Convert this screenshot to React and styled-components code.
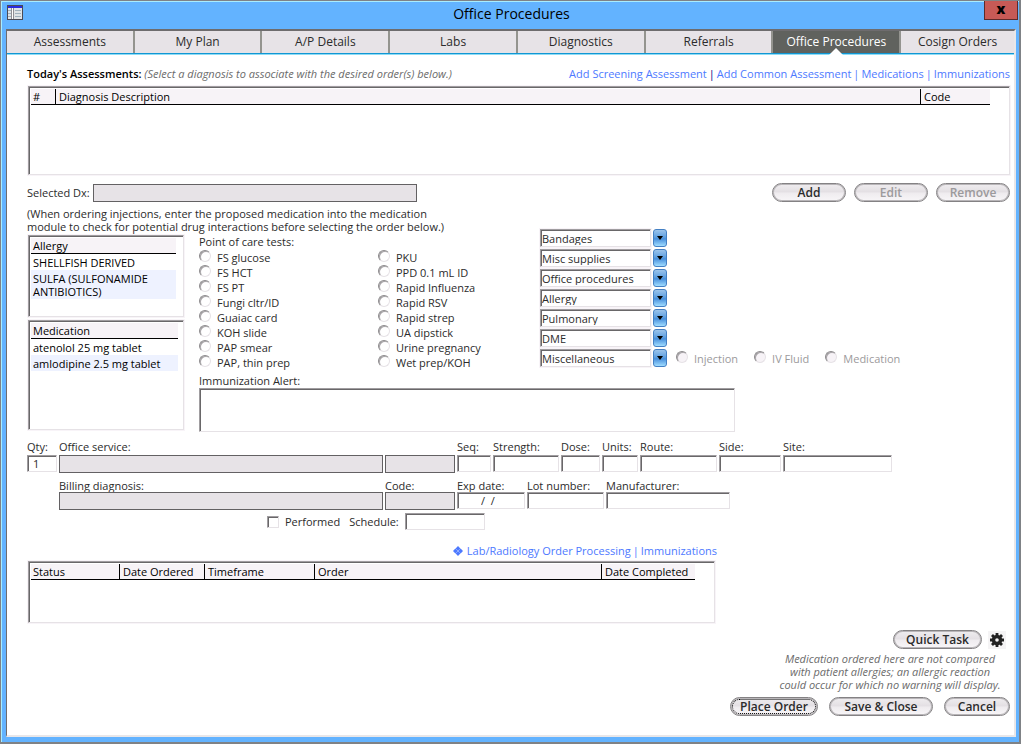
import React, { useRef } from "react";
import styled, { createGlobalStyle, css } from "styled-components";

const GlobalStyle = createGlobalStyle`
  * {
    box-sizing: border-box;
  }

  body {
    margin: 0;
    background: #63b3ff;
    color: #2b2b2b;
    font: 11px/13px "Open Sans", "Noto Sans", sans-serif;
  }

  button,
  input,
  select,
  textarea {
    margin: 0;
    color: inherit;
    font: inherit;
  }
`;

const sunken = css`
  border: 1px solid;
  border-color: #a09da0 #e6e2e6 #e6e2e6 #a09da0;
  box-shadow: inset 1px 1px #696769;
  background: #fff;
`;

/* window frame */

const Window = styled.div`
  display: flex;
  flex-direction: column;
  min-height: 100vh;
  border: 1px solid #7f8286;
  border-right-width: 2px;
  border-bottom-width: 2px;
  background: #63b3ff;
  box-shadow: inset 1px 1px #a8ecff;
`;

const TitleBar = styled.header`
  display: grid;
  grid-template-columns: 34px 1fr 34px;
  height: 28px;
  margin: 0 1px 0 4px;
`;

const WindowIcon = styled.svg`
  margin: 4px 0 0 2px;
`;

const Title = styled.h1`
  margin: 3px 0 0;
  color: #000;
  font-size: 14px;
  line-height: 20px;
  font-weight: 400;
  text-align: center;
`;

const CloseButton = styled.button`
  height: 19px;
  padding: 0 0 3px;
  border: 1px solid #5c2b2b;
  border-top: 0;
  background: #c75a56;
  color: #000;
  font-size: 14px;
  line-height: 14px;
  font-weight: 800;
`;

const Client = styled.main`
  display: flex;
  flex: 1;
  flex-direction: column;
  margin: 0 3px 5px 5px;
  border: 1px solid #6e6c6e;
  border-top-width: 2px;
  border-right: 2px solid #e9e7e9;
  border-bottom: 2px solid #e9e7e9;
  background: #fff;
`;

const Tabs = styled.nav`
  display: grid;
  grid-template-columns: repeat(7, 128fr) 113fr;
  border-bottom: 1px solid #1197d4;
  box-shadow: 0 1px #8fdcf5;
`;

const Tab = styled.button`
  position: relative;
  height: 22px;
  padding: 0;
  border: 0;
  border-right: 2px solid #94948f;
  background: ${({ $active }) => ($active ? "#60625e" : "#e7e3e7")};
  color: ${({ $active }) => ($active ? "#fff" : "#2b2b2b")};
  font-size: 12px;
  line-height: 20px;

  &:last-child {
    border-right: 0;
  }
`;

const TabPointer = styled.svg`
  position: absolute;
  bottom: -2px;
  left: 50%;
  margin-left: -7px;
`;

const Body = styled.div`
  display: flex;
  flex: 1;
  flex-direction: column;
  padding: 13px 4px 19px 20px;
`;

/* shared parts */

const Row = styled.div`
  display: flex;
  align-items: center;
  justify-content: space-between;
`;

const Heading = styled.h2`
  margin: 0;
  color: #000;
  font-size: 11px;
  line-height: 13px;
  font-weight: 600;

  em {
    color: #6b6b6b;
    font-weight: 400;
  }
`;

const Links = styled.div`
  display: flex;
  gap: 2px;
  color: #4d79ff;

  a {
    color: inherit;
    text-decoration: none;
  }
`;

const DarkBar = styled.span`
  color: #000080;
`;

const ListBox = styled.div`
  ${sunken}
  height: ${({ $height }) => $height}px;
  margin-left: 1px;
  padding: 2px ${({ $gutter }) => $gutter}px 0 2px;
  outline: 1px solid #f8f4f8;
  color: #000;
`;

const AssessmentBox = styled(ListBox)`
  margin-top: 6px;
  margin-bottom: 8px;
`;

const Table = styled.table`
  width: 100%;
  border-collapse: separate;
  border-spacing: 0;
  table-layout: fixed;

  th {
    height: 16px;
    padding: 0 2px;
    border-right: 1px solid #000;
    border-bottom: 1px solid #000;
    background: #f7f3f7;
    font-weight: 400;
    line-height: 15px;
    text-align: left;
  }

  th + th {
    padding-left: 3px;
  }

  th:last-child {
    border-right: 0;
  }

  td {
    padding: 2px 2px 1px;
  }

  tr:nth-child(even) td {
    background: #eef2ff;
  }
`;

const Col = styled.col`
  width: ${({ $width }) => $width}px;
`;

const Pill = styled.button`
  min-width: ${({ $width }) => $width}px;
  height: 19px;
  padding: 0 8px;
  border: 1px solid #848284;
  border-radius: 10px;
  background: linear-gradient(#efedef, #e4e0e4 45%, #efecef 55%, #f8f6f8);
  box-shadow: inset 0 0 0 1px #b8b5b8;
  color: #2b2b2b;
  font-size: 12px;
  line-height: 17px;
  font-weight: 600;
  ${({ $focused }) =>
    $focused && "outline: 1px dotted #000; outline-offset: -3px;"}

  &:disabled {
    color: #9c9a9c;
  }
`;

const Buttons = styled.div`
  display: flex;
  gap: ${({ $gap }) => $gap}px;
`;

const Input = styled.input`
  ${sunken}
  width: 100%;
  height: 17px;
  padding: 0 5px;
  border-radius: 0;

  &:read-only {
    height: 18px;
    border: 1px solid #636163;
    background: #e7e3e7;
    box-shadow: none;
  }
`;

const DxField = styled.label`
  display: grid;
  grid-template-columns: 64px 324px;
  gap: 2px;
  align-items: center;
`;

const Note = styled.p`
  margin: 5px 0 2px;
`;

/* middle of the form */

const Middle = styled.div`
  display: grid;
  grid-template-columns: 157px 1fr;
  gap: 15px;
`;

const Lists = styled.div`
  display: grid;
  gap: 3px;
  align-content: start;
`;

const Choices = styled.div`
  display: grid;
  grid-template-columns: 341px 1fr;
`;

const Tests = styled.fieldset`
  display: grid;
  grid-template-rows: repeat(8, 15px);
  grid-template-columns: 179px 1fr;
  grid-auto-flow: column;
  align-content: start;
  margin: 0;
  padding: 2px 0 0;
  border: 0;
`;

const Legend = styled.legend`
  padding: 0;
`;

const Choice = styled.label`
  display: flex;
  gap: 6px;
  align-items: flex-start;
  color: ${({ $muted }) => ($muted ? "#9c9a9c" : "inherit")};
  line-height: 15px;
`;

const Radio = styled.input`
  width: 12px;
  height: 12px;
  appearance: none;
  border: 1px solid;
  border-color: #8c8a8c #e6e2e6 #e6e2e6 #8c8a8c;
  border-radius: 50%;
  background: #fff;
  box-shadow: inset 1px 1px #a8a5a8;

  &:checked {
    background: radial-gradient(#000 2px, #fff 3px);
  }

  &:disabled {
    background: #f7f3f7;
  }
`;

/* the drop-downs start a little above the lists beside them */
const Pickers = styled.div`
  display: grid;
  gap: 2px;
  align-content: start;
  margin-top: -6px;
`;

const PickerRow = styled.div`
  display: flex;
  gap: 2px;
  align-items: center;
`;

const Select = styled.select`
  ${sunken}
  width: 111px;
  height: 18px;
  padding: 0 1px;
  border-radius: 0;
  appearance: none;
  outline: 1px solid #f8f4f8;
`;

const ArrowButton = styled.button`
  display: grid;
  place-items: center;
  width: 14px;
  height: 18px;
  padding: 0;
  border: 1px solid #4480c4;
  border-radius: 3px;
  background: linear-gradient(#9cc4ec, #5f9fe0 45%, #4a90dc 55%, #9fdcff);
`;

const Kinds = styled.div`
  display: flex;
  gap: 16px;
  margin-left: 7px;
`;

const Alert = styled.label`
  display: block;
  margin-top: 4px;
`;

const AlertText = styled.textarea`
  ${sunken}
  display: block;
  width: 536px;
  height: 44px;
  margin-top: 1px;
  resize: none;
`;

/* order fields */

const Fields = styled.div`
  display: grid;
  grid-template-columns: ${({ $columns }) => $columns};
  gap: 2px;
  align-items: start;
  margin-top: ${({ $top }) => $top}px;
  margin-left: ${({ $indent }) => $indent || 0}px;
`;

const Field = styled.label`
  display: flex;
  flex-direction: column;
  white-space: nowrap;
  gap: ${({ $gap }) => $gap || 0}px;
`;

const FieldCaption = styled.span`
  height: 13px;
`;

const DateInput = styled(Input)`
  padding-left: 23px;
`;

const Schedule = styled.div`
  display: flex;
  gap: 9px;
  align-items: center;
  margin: 3px 0 0 240px;

  label {
    display: flex;
    gap: 6px;
    align-items: center;
  }
`;

const ScheduleInput = styled(Input)`
  width: 80px;
`;

const Checkbox = styled.input`
  ${sunken}
  width: 12px;
  height: 12px;
  appearance: none;

  &:checked {
    background: #696769;
  }
`;

const Orders = styled.section`
  width: 690px;
  margin-top: 14px;
`;

const OrderLinks = styled(Links)`
  align-items: center;
  justify-content: flex-end;
  margin-bottom: 4px;

  svg {
    margin-right: 2px;
  }
`;

const OrderBox = styled(ListBox)`
  margin-right: 2px;
`;

const Footer = styled.footer`
  display: flex;
  flex-direction: column;
  align-items: flex-end;
  margin-top: auto;
`;

const TaskRow = styled.div`
  display: flex;
  gap: 6px;
  align-items: center;
  padding-right: 4px;
`;

const GearButton = styled.button`
  display: grid;
  place-items: center;
  width: 18px;
  height: 18px;
  padding: 0;
  border: 0;
  background: #f5f4f5;
`;

const Warning = styled.p`
  width: 222px;
  margin: 3px 9px 6px 0;
  color: #6b6b6b;
  font-style: italic;
  text-align: center;
`;

const tabs = [
  "Assessments",
  "My Plan",
  "A/P Details",
  "Labs",
  "Diagnostics",
  "Referrals",
  "Office Procedures",
  "Cosign Orders",
];

const tests = [
  "FS glucose",
  "FS HCT",
  "FS PT",
  "Fungi cltr/ID",
  "Guaiac card",
  "KOH slide",
  "PAP smear",
  "PAP, thin prep",
  "PKU",
  "PPD 0.1 mL ID",
  "Rapid Influenza",
  "Rapid RSV",
  "Rapid strep",
  "UA dipstick",
  "Urine pregnancy",
  "Wet prep/KOH",
];

const pickers = [
  "Bandages",
  "Misc supplies",
  "Office procedures",
  "Allergy",
  "Pulmonary",
  "DME",
  "Miscellaneous",
];

const Picker = ({ name, children }) => {
  const select = useRef(null);
  return (
    <PickerRow>
      <Select ref={select} aria-label={name}>
        <option>{name}</option>
      </Select>
      <ArrowButton
        type="button"
        aria-label={`Open ${name}`}
        onClick={() => select.current.showPicker()}
      >
        <svg width="6" height="4" viewBox="0 0 6 4">
          <path d="M0 0h6L3 4z" fill="#000" />
        </svg>
      </ArrowButton>
      {children}
    </PickerRow>
  );
};

const DataList = ({ title, rows, height, gutter }) => (
  <ListBox $height={height} $gutter={gutter}>
    <Table>
      <thead>
        <tr>
          <th>{title}</th>
        </tr>
      </thead>
      <tbody>
        {rows.map((row) => (
          <tr key={row}>
            <td>{row}</td>
          </tr>
        ))}
      </tbody>
    </Table>
  </ListBox>
);

const LabeledInput = ({ label, gap, ...rest }) => (
  <Field $gap={gap}>
    <FieldCaption>{label}</FieldCaption>
    <Input {...rest} />
  </Field>
);

const App = () => (
  <>
    <GlobalStyle />
    <Window>
      <TitleBar>
        <WindowIcon width="16" height="15" viewBox="0 0 16 15">
          <path d="M0 0h16v15H0z" fill="#4a4a55" />
          <path d="M1 3h14v11H1z" fill="#dfe3e6" />
          <path d="M1 1h14v2H1z" fill="#2b2be0" />
          <path
            d="M1 5.500h3M8 5.500h6M1 8.500h3M8 8.500h6M1 11.500h3M8 11.500h6"
            stroke="#9fb0bc"
          />
          <path d="M4.500 3v11M6.500 3v11" stroke="#8f8f94" />
          <path d="M5.500 3v11" stroke="#fff" />
        </WindowIcon>
        <Title>Office Procedures</Title>
        <CloseButton type="button" aria-label="Close">
          x
        </CloseButton>
      </TitleBar>
      <Client>
        <Tabs>
          {tabs.map((tab) => (
            <Tab key={tab} type="button" $active={tab === "Office Procedures"}>
              {tab}
              {tab === "Office Procedures" && (
                <TabPointer width="14" height="7" viewBox="0 0 14 7">
                  <path d="M0 7 7 0l7 7z" fill="#fff" />
                </TabPointer>
              )}
            </Tab>
          ))}
        </Tabs>
        <Body>
          <Row>
            <Heading>
              Today's Assessments:{" "}
              <em>
                (Select a diagnosis to associate with the desired order(s)
                below.)
              </em>
            </Heading>
            <Links>
              <a href="#screening">Add Screening Assessment</a>
              <DarkBar>|</DarkBar>
              <a href="#common">Add Common Assessment</a>
              <span>|</span>
              <a href="#medications">Medications</a>
              <span>|</span>
              <a href="#immunizations">Immunizations</a>
            </Links>
          </Row>
          <AssessmentBox $height={89} $gutter={19}>
            <Table>
              <colgroup>
                <Col $width={25} />
                <col />
                <Col $width={69} />
              </colgroup>
              <thead>
                <tr>
                  <th>#</th>
                  <th>Diagnosis Description</th>
                  <th>Code</th>
                </tr>
              </thead>
            </Table>
          </AssessmentBox>
          <Row>
            <DxField>
              Selected Dx:
              <Input readOnly />
            </DxField>
            <Buttons $gap={8}>
              <Pill type="button" $width={74}>
                Add
              </Pill>
              <Pill type="button" $width={74} disabled>
                Edit
              </Pill>
              <Pill type="button" $width={74} disabled>
                Remove
              </Pill>
            </Buttons>
          </Row>
          <Note>
            (When ordering injections, enter the proposed medication into the
            medication
            <br />
            module to check for potential drug interactions before selecting the
            order below.)
          </Note>
          <Middle>
            <Lists>
              <DataList
                title="Allergy"
                height={82}
                gutter={7}
                rows={["SHELLFISH DERIVED", "SULFA (SULFONAMIDE ANTIBIOTICS)"]}
              />
              <DataList
                title="Medication"
                height={110}
                gutter={5}
                rows={["atenolol 25 mg tablet", "amlodipine 2.5 mg tablet"]}
              />
            </Lists>
            <div>
              <Choices>
                <Tests>
                  <Legend>Point of care tests:</Legend>
                  {tests.map((test) => (
                    <Choice key={test}>
                      <Radio type="radio" name="test" />
                      {test}
                    </Choice>
                  ))}
                </Tests>
                <Pickers>
                  {pickers.map((name) => (
                    <Picker key={name} name={name}>
                      {name === "Miscellaneous" && (
                        <Kinds>
                          {["Injection", "IV Fluid", "Medication"].map(
                            (kind) => (
                              <Choice key={kind} $muted>
                                <Radio type="radio" name="kind" disabled />
                                {kind}
                              </Choice>
                            )
                          )}
                        </Kinds>
                      )}
                    </Picker>
                  ))}
                </Pickers>
              </Choices>
              <Alert>
                Immunization Alert:
                <AlertText />
              </Alert>
            </div>
          </Middle>
          <Fields
            $top={8}
            $columns="30px 324px 70px 34px 66px 39px 36px 77px 62px 109px"
          >
            <LabeledInput gap={2} label="Qty:" defaultValue="1" />
            <LabeledInput gap={2} label="Office service:" readOnly />
            <LabeledInput
              gap={2}
              label=""
              aria-label="Service code"
              readOnly
            />
            <LabeledInput gap={2} label="Seq:" />
            <LabeledInput gap={2} label="Strength:" />
            <LabeledInput gap={2} label="Dose:" />
            <LabeledInput gap={2} label="Units:" />
            <LabeledInput gap={2} label="Route:" />
            <LabeledInput gap={2} label="Side:" />
            <LabeledInput gap={2} label="Site:" />
          </Fields>
          <Fields $top={6} $indent={32} $columns="324px 70px 68px 77px 124px">
            <LabeledInput label="Billing diagnosis:" readOnly />
            <LabeledInput label="Code:" readOnly />
            <Field>
              <FieldCaption>Exp date:</FieldCaption>
              <DateInput defaultValue="/  /" />
            </Field>
            <LabeledInput label="Lot number:" />
            <LabeledInput label="Manufacturer:" />
          </Fields>
          <Schedule>
            <label>
              <Checkbox type="checkbox" />
              Performed
            </label>
            <label>
              Schedule:
              <ScheduleInput />
            </label>
          </Schedule>
          <Orders>
            <OrderLinks>
              <svg width="10" height="10" viewBox="0 0 10 10">
                <path
                  d="M5 0l2.400 2.400L5 4.800 2.600 2.400zM2.400 2.600L4.800 5 2.400 7.400 0 5zM7.600 2.600L10 5 7.600 7.400 5.200 5zM5 5.200l2.400 2.400L5 10 2.600 7.600z"
                  fill="#4d79ff"
                />
              </svg>
              <a href="#processing">Lab/Radiology Order Processing</a>
              <span>|</span>
              <a href="#immunizations">Immunizations</a>
            </OrderLinks>
            <OrderBox $height={62} $gutter={19}>
              <Table>
                <colgroup>
                  <Col $width={89} />
                  <Col $width={85} />
                  <Col $width={110} />
                  <col />
                  <Col $width={93} />
                </colgroup>
                <thead>
                  <tr>
                    <th>Status</th>
                    <th>Date Ordered</th>
                    <th>Timeframe</th>
                    <th>Order</th>
                    <th>Date Completed</th>
                  </tr>
                </thead>
              </Table>
            </OrderBox>
          </Orders>
          <Footer>
            <TaskRow>
              <Pill type="button" $width={89}>
                Quick Task
              </Pill>
              <GearButton type="button" aria-label="Settings">
                <svg width="14" height="14" viewBox="0 0 14 14">
                  <circle
                    cx="7"
                    cy="7"
                    r="3.500"
                    fill="none"
                    stroke="#222"
                    strokeWidth="3.400"
                  />
                  <path
                    d="M7 0v3M7 11v3M0 7h3M11 7h3M2 2l2.200 2.200M9.800 9.800L12 12M12 2L9.800 4.200M4.200 9.800L2 12"
                    stroke="#222"
                    strokeWidth="2.800"
                  />
                </svg>
              </GearButton>
            </TaskRow>
            <Warning>
              Medication ordered here are not compared with patient allergies;
              an allergic reaction could occur for which no warning will
              display.
            </Warning>
            <Buttons $gap={11}>
              <Pill type="button" $width={88} $focused>
                Place Order
              </Pill>
              <Pill type="button" $width={104}>
                Save &amp; Close
              </Pill>
              <Pill type="button" $width={66}>
                Cancel
              </Pill>
            </Buttons>
          </Footer>
        </Body>
      </Client>
    </Window>
  </>
);

export default App;
